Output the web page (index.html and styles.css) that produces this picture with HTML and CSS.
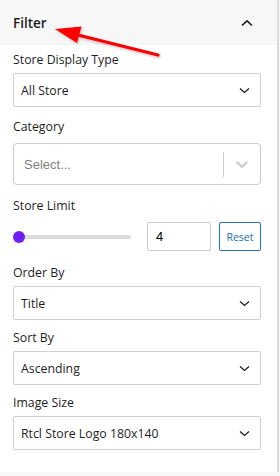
FILE: index.html
```html
<!DOCTYPE html>
<html lang="en">
<head>
<meta charset="utf-8">
<title>Filter</title>
<link rel="stylesheet" href="styles.css">
</head>
<body>
<div class="panel">
  <div class="panel-header">
    <span class="panel-title">Filter</span>
    <svg class="icon-up" width="12" height="8" viewBox="0 0 12 8"><path d="M1 6.5 L6 1.8 L11 6.5" fill="none" stroke="#1e1e1e" stroke-width="1.6"/></svg>
  </div>
  <div class="panel-body">
    <div class="field f1">
      <label class="label">Store Display Type</label>
      <div class="select"><span>All Store</span><svg class="chev" width="11" height="7" viewBox="0 0 11 7"><path d="M1 1.5 L5.5 5.5 L10 1.5" fill="none" stroke="#1e1e1e" stroke-width="1.3"/></svg></div>
    </div>
    <div class="field f2">
      <label class="label label-wide">Category</label>
      <div class="rselect">
        <span class="placeholder">Select...</span>
        <span class="sep"></span>
        <svg class="rchev" width="20" height="20" viewBox="0 0 20 20"><path fill="#cccccc" d="M4.516 7.548c0.436-0.446 1.043-0.481 1.576 0l3.908 3.747 3.908-3.747c0.533-0.481 1.141-0.446 1.574 0 0.436 0.445 0.408 1.197 0 1.615-0.406 0.418-4.695 4.502-4.695 4.502-0.217 0.223-0.502 0.335-0.787 0.335s-0.57-0.112-0.789-0.335c0 0-4.287-4.084-4.695-4.502s-0.436-1.17 0-1.615z"/></svg>
      </div>
    </div>
    <div class="field f3">
      <label class="label label-wide">Store Limit</label>
      <div class="range-row">
        <div class="range"><div class="track"></div><div class="thumb"></div></div>
        <div class="num">4</div>
        <button class="reset">Reset</button>
      </div>
    </div>
    <div class="field f4">
      <label class="label">Order By</label>
      <div class="select"><span>Title</span><svg class="chev" width="11" height="7" viewBox="0 0 11 7"><path d="M1 1.5 L5.5 5.5 L10 1.5" fill="none" stroke="#1e1e1e" stroke-width="1.3"/></svg></div>
    </div>
    <div class="field f5">
      <label class="label">Sort By</label>
      <div class="select"><span>Ascending</span><svg class="chev" width="11" height="7" viewBox="0 0 11 7"><path d="M1 1.5 L5.5 5.5 L10 1.5" fill="none" stroke="#1e1e1e" stroke-width="1.3"/></svg></div>
    </div>
    <div class="field f6">
      <label class="label">Image Size</label>
      <div class="select"><span>Rtcl Store Logo 180x140</span><svg class="chev" width="11" height="7" viewBox="0 0 11 7"><path d="M1 1.5 L5.5 5.5 L10 1.5" fill="none" stroke="#1e1e1e" stroke-width="1.3"/></svg></div>
    </div>
  </div>
  <svg class="arrow" width="180" height="70" viewBox="0 0 180 70">
    <g filter="url(#sh)">
      <line x1="78" y1="35" x2="158" y2="55" stroke="#ff0000" stroke-width="3.2" stroke-linecap="round"/>
      <polygon points="55,29 81.5,26.5 77,43" fill="#ff0000"/>
    </g>
    <defs>
      <filter id="sh" x="-10%" y="-30%" width="130%" height="170%">
        <feDropShadow dx="1" dy="1.5" stdDeviation="1.2" flood-color="#000" flood-opacity="0.25"/>
      </filter>
    </defs>
  </svg>
</div>
</body>
</html>
```
FILE: styles.css
```css
* { box-sizing: border-box; }
html, body { margin: 0; padding: 0; background: #ffffff; }
body {
  width: 280px;
  height: 476px;
  overflow: hidden;
  font-family: "Open Sans", "Noto Sans", sans-serif;
  color: #1e1e1e;
  background: #f6f7f7;
}
.panel {
  position: relative;
  width: 279px;
  height: 472px;
  background: #ffffff;
  border-right: 2px solid #dcdcde;
}
.panel-header {
  height: 45px;
  background: #f7f7f7;
  display: flex;
  align-items: center;
  justify-content: space-between;
  padding: 1px 24px 0 13px;
}
.panel-title {
  font-size: 13.5px;
  font-weight: 600;
  color: #1e1e1e;
}
.icon-up { display: block; }
.panel-body {
  padding: 5px 16px 0 13px;
}
.field { display: flex; flex-direction: column; }
.f1 { margin-bottom: 10px; }
.f2 { margin-bottom: 11px; }
.f3 { margin-bottom: 12px; }
.f4, .f5 { margin-bottom: 8px; }
.label {
  font-size: 12.3px;
  line-height: 20px;
  margin-bottom: 3px;
  color: #1e1e1e;
}
.label-wide { margin-bottom: 6px; }
.select {
  height: 34px;
  border: 1px solid #d0d0d0;
  border-radius: 2px;
  display: flex;
  align-items: center;
  justify-content: space-between;
  padding: 0 10px 0 7px;
  font-size: 12.3px;
  color: #1e1e1e;
}
.chev { display: block; }
.rselect {
  height: 42px;
  border: 1px solid #cccccc;
  border-radius: 4px;
  display: flex;
  align-items: center;
  padding-left: 10px;
  font-family: "Liberation Sans", Arial, sans-serif;
  font-size: 13px;
}
.placeholder { flex: 1; color: #808080; }
.sep { width: 1px; height: 25px; background: #cccccc; }
.rselect .rchev { margin: 0 8px 0 8px; display: block; }
.range-row {
  display: flex;
  align-items: center;
  height: 29px;
}
.range {
  position: relative;
  flex: 1;
  height: 12px;
  margin-right: 16px;
}
.track {
  position: absolute;
  left: 0; right: 0; top: 4px;
  height: 4px;
  border-radius: 2px;
  background: #dcdcde;
}
.thumb {
  position: absolute;
  left: 0; top: 0;
  width: 12px; height: 12px;
  border-radius: 50%;
  background: #7020f5;
}
.num {
  width: 64px;
  height: 29px;
  border: 1px solid #cccccc;
  border-radius: 2px;
  display: flex;
  align-items: center;
  padding-left: 8px;
  font-family: "Liberation Sans", Arial, sans-serif;
  font-size: 13px;
  color: #000;
}
.reset {
  margin-left: 8px;
  width: 42px;
  height: 29px;
  border: 1px solid #2271b1;
  border-radius: 2px;
  background: #ffffff;
  color: #2271b1;
  font-family: "Open Sans", "Noto Sans", sans-serif;
  font-size: 10.5px;
  padding: 0;
}
.arrow {
  position: absolute;
  left: 0; top: 0;
  pointer-events: none;
}
```
